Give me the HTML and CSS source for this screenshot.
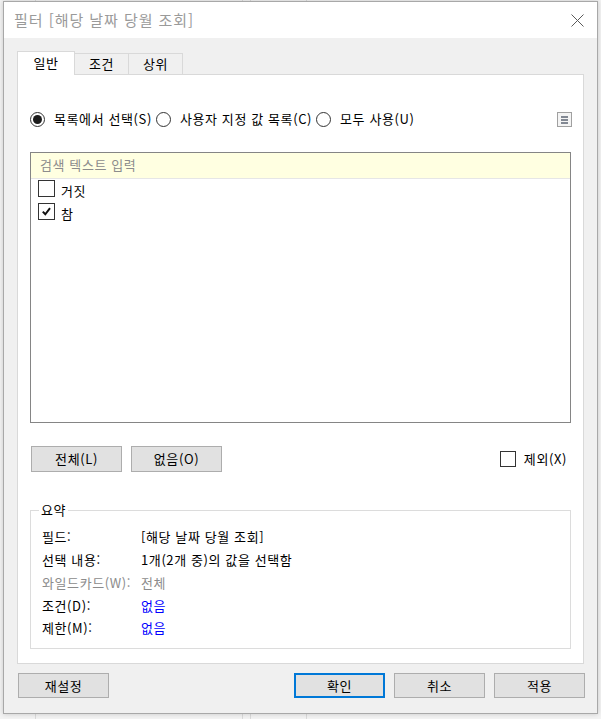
FILE: index.html
```html
<!DOCTYPE html>
<html lang="ko">
<head>
<meta charset="utf-8">
<title>필터</title>
<link rel="stylesheet" href="styles.css">
</head>
<body>
<div class="dialog">
  <div class="titlebar">
    <span class="title">필터 [해당 날짜 당월 조회]</span>
    <svg class="close" width="13" height="13" viewBox="0 0 13 13"><path d="M0.5 0.5 L12.5 12.5 M12.5 0.5 L0.5 12.5" stroke="#5a5a5a" stroke-width="1" fill="none"/></svg>
  </div>
  <div class="body">
    <div class="tabs">
      <div class="tab active">일반</div>
      <div class="tab">조건</div>
      <div class="tab">상위</div>
    </div>
    <div class="panel">
      <div class="radios">
        <label class="radio"><span class="dot checked"></span><span class="rtext">목록에서 선택(S)</span></label>
        <label class="radio"><span class="dot"></span><span class="rtext">사용자 지정 값 목록(C)</span></label>
        <label class="radio"><span class="dot"></span><span class="rtext">모두 사용(U)</span></label>
        <span class="menu">
          <svg width="15" height="15" viewBox="0 0 15 15"><rect x="0.5" y="0.5" width="14" height="14" fill="#f4f4f4" stroke="#a0a0a0"/><path d="M4 5 H11 M4 8 H11 M4 11 H11" stroke="#5c6473" stroke-width="1.6"/></svg>
        </span>
      </div>
      <div class="listbox">
        <div class="search">검색 텍스트 입력</div>
        <div class="item"><span class="cb"></span><span>거짓</span></div>
        <div class="item"><span class="cb"><svg width="15" height="15" viewBox="0 0 15 15"><path d="M3.8 7.6 L6.3 10.3 L11 4.2" stroke="#111" stroke-width="2" fill="none"/></svg></span><span>참</span></div>
      </div>
      <div class="btnrow">
        <button class="btn">전체(L)</button>
        <button class="btn">없음(O)</button>
        <label class="exclude"><span class="cb small"></span><span>제외(X)</span></label>
      </div>
      <div class="summary">
        <div class="stitle">요약</div>
        <div class="srows">
          <span>필드:</span><span>[해당 날짜 당월 조회]</span>
          <span>선택 내용:</span><span>1개(2개 중)의 값을 선택함</span>
          <span class="muted">와일드카드(W):</span><span class="muted">전체</span>
          <span>조건(D):</span><span class="blue">없음</span>
          <span>제한(M):</span><span class="blue">없음</span>
        </div>
      </div>
    </div>
    <div class="footer">
      <button class="btn fbtn">재설정</button>
      <button class="btn fbtn primary">확인</button>
      <button class="btn fbtn">취소</button>
      <button class="btn fbtn">적용</button>
    </div>
  </div>
</div>
</body>
</html>
```
FILE: styles.css
```css
* { box-sizing: border-box; }
html, body { margin: 0; padding: 0; }
body {
  width: 601px;
  height: 719px;
  overflow: hidden;
  background-color: #f3f3f3;
  background-image:
    linear-gradient(#dadada, #dadada),
    linear-gradient(#dadada, #dadada),
    linear-gradient(#dadada, #dadada),
    linear-gradient(#dadada, #dadada);
  background-size: 1px 719px, 1px 719px, 1px 719px, 1px 719px;
  background-position: 35px 0, 242px 0, 306px 0, 250px 0;
  background-repeat: no-repeat;
  padding: 1px 0 0 3px;
  font-family: "Noto Sans CJK KR", "Noto Sans", sans-serif;
  font-size: 13px;
  letter-spacing: 0.6px;
  color: #000;
}
.dialog {
  width: 595px;
  height: 713px;
  border: 1px solid #a8a8a8;
  box-shadow: 0 0 5px rgba(0,0,0,0.18);
  background: #f0f0f0;
  display: flex;
  flex-direction: column;
}
.titlebar {
  height: 36px;
  flex: none;
  background: #fff;
  display: flex;
  align-items: center;
  padding: 0 12px 0 10px;
}
.title {
  font-size: 15px;
  letter-spacing: 0.95px;
  line-height: 20px;
  color: #9a9a9a;
  flex: 1;
}
.close { display: block; margin-right: 1px; }
.body {
  flex: 1;
  padding: 13px 13px 0 13px;
}
.tabs {
  height: 23px;
  display: flex;
  align-items: flex-end;
}
.tab {
  width: 55px;
  height: 21px;
  border: 1px solid #d9d9d9;
  border-bottom: none;
  background: #f0f0f0;
  margin-left: -1px;
  text-align: center;
  line-height: 20px;
}
.tab.active {
  width: 58px;
  height: 24px;
  margin-left: 0;
  margin-bottom: -1px;
  background: #fff;
  position: relative;
  z-index: 1;
  line-height: 22px;
}
.panel {
  height: 590px;
  background: #fff;
  border: 1px solid #d9d9d9;
  padding: 0 12px;
}
.radios {
  margin-top: 36px;
  height: 16px;
  display: flex;
  align-items: center;
  line-height: 16px;
}
.radio {
  display: flex;
  align-items: center;
  margin-right: 4px;
}
.dot {
  width: 15px;
  height: 15px;
  border: 1px solid #333;
  border-radius: 50%;
  display: flex;
  align-items: center;
  justify-content: center;
  background: #fff;
}
.dot.checked::after {
  content: "";
  width: 9px;
  height: 9px;
  border-radius: 50%;
  background: #1c1c1c;
}
.rtext { margin-left: 9px; }
.menu { margin-left: auto; display: block; height: 15px; margin-right: -1px; }
.menu svg { display: block; }
.listbox {
  margin-top: 25px;
  height: 271px;
  border: 1px solid #858585;
}
.search {
  height: 26px;
  background: #ffffe1;
  border-bottom: 1px solid #e6e6e6;
  color: #8c8c8c;
  padding-left: 9px;
  line-height: 24px;
}
.item {
  height: 23px;
  display: flex;
  align-items: center;
  padding-left: 7px;
  line-height: 20px;
}
.cb {
  width: 17px;
  height: 17px;
  border: 1px solid #333;
  background: #fff;
  margin-right: 6px;
  display: flex;
  align-items: center;
  justify-content: center;
  align-self: flex-start;
  margin-top: 1px;
}
.cb svg { display: block; }
.btnrow {
  margin-top: 23px;
  height: 26px;
  display: flex;
  align-items: center;
  padding-left: 1px;
}
.btn {
  font-family: inherit;
  font-size: 13px;
  letter-spacing: 0.6px;
  color: #000;
  background: #e1e1e1;
  border: 1px solid #adadad;
  width: 91px;
  height: 26px;
  padding: 0;
  line-height: 20px;
  margin-right: 9px;
}
.exclude {
  margin-left: auto;
  display: flex;
  align-items: center;
  margin-right: 4px;
  line-height: 20px;
}
.cb.small {
  width: 16px;
  height: 16px;
  align-self: center;
  margin-top: 0;
  margin-right: 8px;
}
.summary {
  margin-top: 38px;
  height: 139px;
  border: 1px solid #dcdcdc;
}
.stitle {
  width: fit-content;
  margin: -9px 0 0 8px;
  padding: 0 2px;
  background: #fff;
  line-height: 16px;
}
.srows {
  padding: 8px 0 0 11px;
  display: grid;
  grid-template-columns: 99px 1fr;
  grid-auto-rows: 22.75px;
  align-items: center;
  line-height: 18px;
}
.muted { color: #8c8c8c; }
.blue { color: #0000ff; }
.footer {
  margin-top: 9px;
  margin-right: -1px;
  display: flex;
  padding-left: 1px;
}
.fbtn {
  height: 25px;
  margin-right: 9px;
}
.fbtn:first-child { margin-right: auto; }
.fbtn:last-child { margin-right: 0; }
.primary { border: 2px solid #0078d7; }
```
